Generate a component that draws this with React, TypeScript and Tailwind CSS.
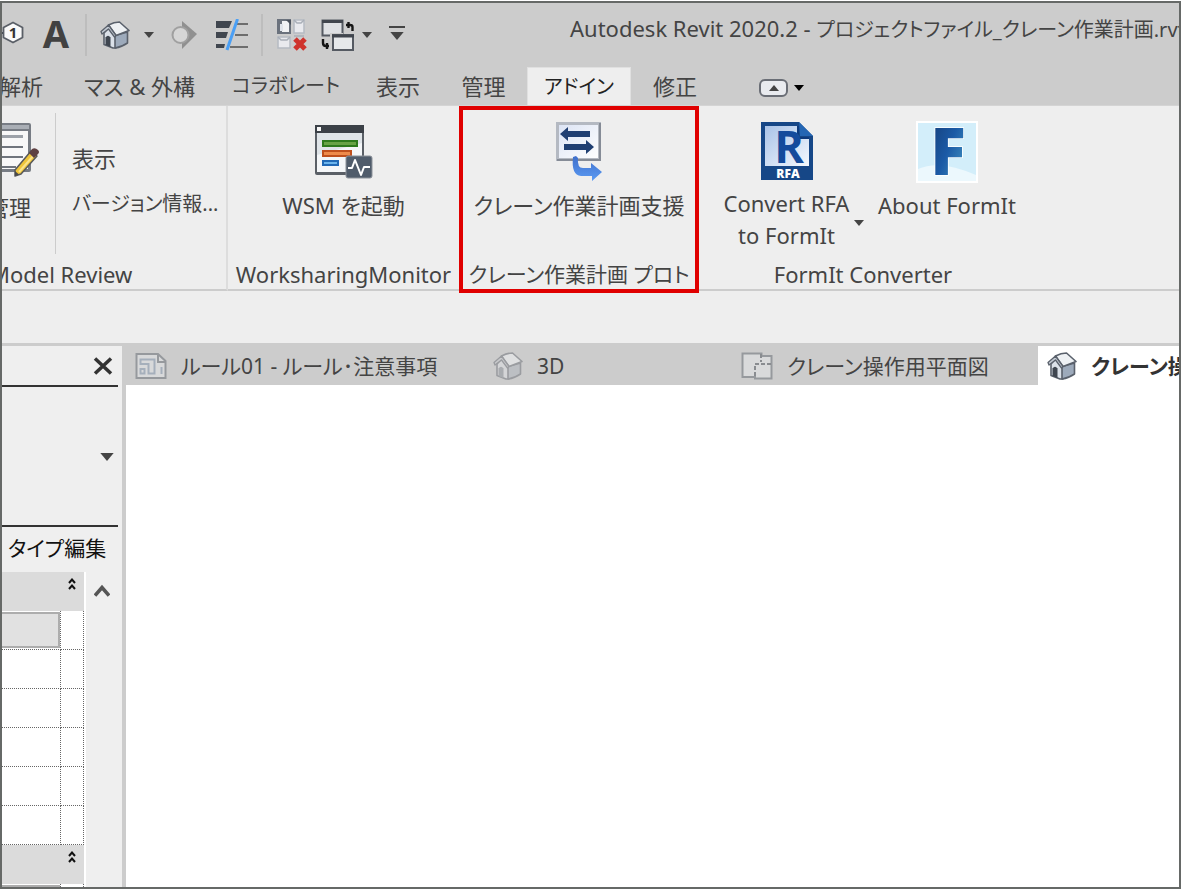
import type { ReactNode } from "react";

const FONT =
  "font-['Noto_Sans','Noto_Sans_CJK_JP',sans-serif] [font-feature-settings:'palt']";

function Caret({ className = "" }: { className?: string }) {
  return (
    <svg viewBox="0 0 10 6" className={className} aria-hidden="true">
      <path d="M0 0H10L5 6Z" fill="currentColor" />
    </svg>
  );
}

function HouseIcon({ faded = false, className = "" }: { faded?: boolean; className?: string }) {
  const line = faded ? "#9a9ca0" : "#5a616c";
  const wall = faded ? "#bcbfc3" : "#9daabb";
  return (
    <svg viewBox="0 0 30 28" className={className} aria-hidden="true">
      <path d="M4 12 9 6.500 16 14V27L13 27 4 23.500Z" fill={faded ? "#d4d5d7" : "#dbe1e9"} stroke={line} strokeWidth="1.600" strokeLinejoin="round" />
      <path d="M15 14.500 27.500 11V22Q22 26 15 27Z" fill={wall} stroke={line} strokeWidth="1.600" strokeLinejoin="round" />
      <path d="M8.500 4Q14 1 19.500 1L29 9.500 16 14.500Z" fill={faded ? "#dfe0e1" : "#eef1f4"} stroke={line} strokeWidth="1.600" strokeLinejoin="round" />
      <path d="M1 10.500 8.500 4 16 14.500 14.500 16 8.500 8 2 13Z" fill={faded ? "#c9cacc" : "#c3cad3"} stroke={line} strokeWidth="1.300" strokeLinejoin="round" />
      <path d="M5.500 24V16.500Q8 13 10.500 16.500V26Z" fill={faded ? "#a9acb0" : "#3f4650"} />
    </svg>
  );
}

function BalloonIcon() {
  return (
    <svg viewBox="0 0 24 24" className="h-6 w-6" aria-hidden="true">
      <path d="M13 1.500 22.500 6.500V16.500L13 21.500 3.500 16.500V6.500Z" fill="#fafafa" stroke="#5a5f67" strokeWidth="1.800" strokeLinejoin="round" />
      <path d="M0 12H3" stroke="#4a4f57" strokeWidth="2" />
      <text x="13" y="17" textAnchor="middle" fontSize="15" fontWeight="700" fill="#333" fontFamily="Open Sans, sans-serif">1</text>
    </svg>
  );
}

function SectionMarkIcon() {
  return (
    <svg viewBox="0 0 26 30" className="h-[30px] w-[26px]" aria-hidden="true">
      <path d="M11 1 26 14 11 29Z" fill="#909090" />
      <circle cx="9.500" cy="15" r="8" fill="#d6d6d6" stroke="#a0a0a0" strokeWidth="2" />
    </svg>
  );
}

function ThinLinesIcon() {
  return (
    <svg viewBox="0 0 32 32" className="h-8 w-8" aria-hidden="true">
      <path d="M0 2H16L13 9H0ZM0 13H12L10 19H0ZM0 25H9L8 29H0Z" fill="#40464f" />
      <path d="M21 5H32M19 16H32M14 28H32" stroke="#6d6d6d" strokeWidth="2" />
      <path d="M21.500 0 11 31" stroke="#4a9ff5" strokeWidth="3" />
    </svg>
  );
}

function CloseHiddenIcon() {
  return (
    <svg viewBox="0 0 30 32" className="h-8 w-[30px]" aria-hidden="true">
      <path d="M1 1H13V14H1Z" fill="#f1f2f4" stroke="#6b727d" strokeWidth="2" />
      <path d="M0 0H5V14H0Z" fill="#6b727d" />
      <path d="M3 5H6V12H3Z" fill="#dfe3ea" />
      <path d="M9 1H14V6Z" fill="#4b525d" />
      <path d="M17 1H27V14H17ZM1 18H13V29H1Z" fill="#e9eaee" stroke="#b5bac2" strokeWidth="1.500" />
      <path d="M17 1 20 4H24L27 1M1 18 4 21H10L13 18M17 17H27" stroke="#a9afb8" strokeWidth="1.500" fill="none" />
      <path d="M18 20 28 30M28 20 18 30" stroke="#cf332c" strokeWidth="5" />
    </svg>
  );
}

function SwitchWindowsIcon() {
  return (
    <svg viewBox="0 0 34 34" className="h-[34px] w-[34px]" aria-hidden="true">
      <path d="M1.500 2.500H21.500V17.500H1.500Z" fill="#dfe1e4" stroke="#555a62" strokeWidth="2" />
      <path d="M1 3.500H22" stroke="#41464e" strokeWidth="3" />
      <path d="M9 15H22V20H9Z" fill="#ccc" />
      <path d="M12 17H32V32H12Z" fill="#e6e8ea" stroke="#555a62" strokeWidth="2" />
      <path d="M11 18H33" stroke="#41464e" strokeWidth="3" />
      <path d="M25 7H29Q31.500 7 31.500 9V13M27.500 4V10M2 21V25Q2 28 5 28H8M6 25V31" fill="none" stroke="#151515" strokeWidth="2.400" />
    </svg>
  );
}

function ManageIcon() {
  return (
    <svg viewBox="0 0 48 56" className="h-14 w-12" aria-hidden="true">
      <rect x="0" y="1" width="40" height="49" rx="2" fill="#777c84" />
      <path d="M0 3H38V7H0Z" fill="#a9aeb5" />
      <path d="M0 9H37V47H0Z" fill="#f8f8f8" />
      <path d="M0 13H32V16H0Z" fill="#9da2a9" />
      <path d="M0 25H32M0 35H32M0 45H25" stroke="#70757d" strokeWidth="2" />
      <path d="M40 29 46 34 30 52 24 54 24 48Z" fill="#efc53a" stroke="#57585a" strokeWidth="1.500" strokeLinejoin="round" />
      <path d="M28 50 43 33" stroke="#fbe38b" strokeWidth="2" />
      <path d="M38 31 41 27Q44 25 47 28 49 30 47 32L43 36Z" fill="#5e4143" />
      <path d="M24 54 24 49 28 52.500Z" fill="#4b4b4b" />
    </svg>
  );
}

function MonitorIcon() {
  return (
    <svg viewBox="0 0 60 58" className="h-[58px] w-[60px]" aria-hidden="true">
      <rect x="1" y="2" width="49" height="50" rx="2" fill="#5a5f66" />
      <path d="M3 10H48V49H3Z" fill="#f4f6f8" />
      <path d="M3 10H48V20L3 32Z" fill="#dfe4e8" />
      <path d="M1 2H50V10H1Z" fill="#3b4047" />
      <rect x="3" y="4" width="4" height="4" fill="#f5f5f5" />
      <rect x="9" y="18" width="34" height="5" fill="#68a345" stroke="#2e7a1c" strokeWidth="2" />
      <rect x="9" y="28" width="28" height="5" fill="#ee8a4a" stroke="#bf4f1c" strokeWidth="2" />
      <rect x="9" y="38" width="15" height="4" fill="#6bb4ec" stroke="#2068b5" strokeWidth="2" />
      <rect x="32" y="33" width="26" height="22" rx="2" fill="#505c6b" stroke="#8c929a" />
      <path d="M34 45H38L41 37 47 52 50 44H56" fill="none" stroke="#fff" strokeWidth="2" strokeLinejoin="round" />
    </svg>
  );
}

function CraneIcon() {
  return (
    <svg viewBox="0 0 48 60" className="h-[60px] w-12" aria-hidden="true">
      <defs>
        <linearGradient id="crane-board" x1="0" y1="0" x2="1" y2="1">
          <stop offset="0" stopColor="#dbe3f4" />
          <stop offset="1" stopColor="#fff" />
        </linearGradient>
        <linearGradient id="crane-arrow" x1="0" y1="0" x2="0" y2="1">
          <stop offset="0" stopColor="#3f6fcb" />
          <stop offset="1" stopColor="#5b9bf3" />
        </linearGradient>
      </defs>
      <rect x="2.500" y="1.500" width="42" height="36" fill="url(#crane-board)" stroke="#b4b9c2" strokeWidth="3" />
      <path d="M45 1V38H2" fill="none" stroke="#858b96" strokeWidth="2" />
      <path d="M5 12 13 5V9H35V15H13V19Z" fill="#203f72" />
      <path d="M39 25 31 18V22H9V28H31V32Z" fill="#203f72" />
      <path d="M18 35 21 34 23 36Q22 46 28 46H36V41L47 50 37 59V54H26Q16 53 18 35Z" fill="url(#crane-arrow)" />
    </svg>
  );
}

function RfaIcon() {
  return (
    <svg viewBox="0 0 52 60" className="h-[60px] w-[52px]" aria-hidden="true">
      <defs>
        <linearGradient id="rfa-page" x1="0" y1="0" x2="1" y2="1">
          <stop offset="0" stopColor="#a9c3e8" />
          <stop offset="1" stopColor="#f4f8fd" />
        </linearGradient>
      </defs>
      <path d="M0 1H38L52 15V59H0Z" fill="#164787" />
      <path d="M4 5H37V17H48V45H4Z" fill="url(#rfa-page)" />
      <path d="M38 1 52 15H39Z" fill="#2466b3" />
      <path d="M37 5V17H48" fill="none" stroke="#0d3a7d" strokeWidth="2" />
      <text x="28" y="42" textAnchor="middle" fontSize="45" fontWeight="700" fill="#144b9c" fontFamily="Open Sans, sans-serif">R</text>
      <text x="27" y="57" textAnchor="middle" fontSize="12" fontWeight="800" fill="#fff" fontFamily="Open Sans, sans-serif">RFA</text>
    </svg>
  );
}

function FormItIcon() {
  return (
    <svg viewBox="0 0 62 62" className="h-[62px] w-[62px]" aria-hidden="true">
      <defs>
        <linearGradient id="formit-letter" x1="0" y1="0" x2="1" y2="1">
          <stop offset="0" stopColor="#14386f" />
          <stop offset="0.500" stopColor="#1b5aa6" />
          <stop offset="1" stopColor="#4fa5c9" />
        </linearGradient>
      </defs>
      <rect width="62" height="62" fill="#fff" />
      <rect x="2" y="2" width="58" height="58" fill="#d3eefa" />
      <path d="M2 48Q24 38 60 54V60H2Z" fill="#ecf8fd" />
      <text x="32" y="54" textAnchor="middle" fontSize="66" fontWeight="800" fill="url(#formit-letter)" stroke="#fff" strokeWidth="1.500" paintOrder="stroke" fontFamily="Open Sans, sans-serif">F</text>
    </svg>
  );
}

function SheetIcon() {
  return (
    <svg viewBox="0 0 32 26" className="h-[26px] w-8" aria-hidden="true">
      <path d="M1.500 1H23L30.500 8V25H1.500Z" fill="#d8d9da" stroke="#96999d" strokeWidth="2" />
      <path d="M23 1V9H30" fill="none" stroke="#96999d" strokeWidth="2" />
      <path d="M5.500 11V6.500H19.500V20.500H13.500V11ZM5.500 16H9.500V20.500H5.500ZM26.500 14V21" fill="none" stroke="#a5afbb" strokeWidth="2" />
    </svg>
  );
}

function PlanIcon() {
  return (
    <svg viewBox="0 0 32 28" className="h-7 w-8" aria-hidden="true">
      <path d="M1.500 1.500H20.500V4H30.500V26.500H14V25H1.500Z" fill="#d9dadb" stroke="#96999d" strokeWidth="2" />
      <path d="M20 2V10M30 12H14V26" fill="none" stroke="#898c90" strokeWidth="2" strokeDasharray="4 2" />
    </svg>
  );
}

function DoubleChevron() {
  return (
    <svg viewBox="0 0 8 12" className="h-3 w-2" aria-hidden="true">
      <path d="M1 5 4 1.500 7 5M1 11 4 7.500 7 11" fill="none" stroke="#111" strokeWidth="2" />
    </svg>
  );
}

function RibbonTab({ width, children, active = false }: { width: string; children: ReactNode; active?: boolean }) {
  return (
    <button
      type="button"
      role="tab"
      aria-selected={active}
      className={`flex shrink-0 items-center justify-center whitespace-nowrap ${width} ${active ? "border border-b-0 border-[#e0e0e0] bg-[#eee] text-[#222]" : ""}`}
    >
      {children}
    </button>
  );
}

function LargeButton({ icon, children }: { icon: ReactNode; children: ReactNode }) {
  return (
    <button type="button" className="flex flex-col items-center gap-1.5 whitespace-nowrap">
      <span className="flex h-[62px] items-center">{icon}</span>
      <span className="flex h-8 items-center">{children}</span>
    </button>
  );
}

function ViewTab({ icon, width, children, active = false }: { icon: ReactNode; width: string; children: ReactNode; active?: boolean }) {
  return (
    <button
      type="button"
      role="tab"
      aria-selected={active}
      className={`flex shrink-0 items-center gap-[14px] whitespace-nowrap pl-[9px] ${width} ${active ? "bg-white font-semibold text-[#333]" : ""}`}
    >
      {icon}
      <span>{children}</span>
    </button>
  );
}

function GroupHeader() {
  return (
    <tr className="h-[39px] bg-[#dbdbdb]">
      <th colSpan={2} className="p-0 align-top">
        <button type="button" aria-label="グループを折りたたむ" className="flex w-full justify-end pt-1.5 pr-2">
          <DoubleChevron />
        </button>
      </th>
    </tr>
  );
}

function PropertyRow({ button = false }: { button?: boolean }) {
  return (
    <tr className="h-[39px]">
      <td className="border-r border-b border-dotted border-[#666] p-0">
        {button && (
          <button type="button" aria-label="編集" className="block h-9 w-full border-2 border-l-0 border-[#adadad] bg-[#e1e1e1]" />
        )}
      </td>
      <td className="border-r border-b border-dotted border-[#666] p-0" />
    </tr>
  );
}

const Separator = () => <span className="h-[42px] w-0.5 bg-[#bdbdbd]" />;

export default function App() {
  return (
    <div className={`h-screen w-full bg-white py-px pr-px text-[22px] leading-8 text-[#444] ${FONT}`}>
      <div className="flex h-full flex-col overflow-hidden border-2 border-[#666967] bg-[#ccc]">
        <header className="flex h-16 shrink-0 items-center overflow-hidden">
          <div className="flex shrink-0 items-center">
            <button type="button" aria-label="タグ" className="-ml-0.5 w-6 pb-1"><BalloonIcon /></button>
            <button type="button" aria-label="文字" className="ml-[18px] w-7 pb-1 text-[38px] leading-none font-bold text-[#414141]">A</button>
            <span className="ml-[15px] flex"><Separator /></span>
            <button type="button" aria-label="3D ビュー" className="ml-[13px]"><HouseIcon className="h-7 w-[30px]" /></button>
            <button type="button" aria-label="3D ビューの選択" className="ml-[14px]"><Caret className="h-1.5 w-[10px]" /></button>
            <button type="button" aria-label="断面" className="ml-[17px]"><SectionMarkIcon /></button>
            <button type="button" aria-label="細線" className="ml-[19px]"><ThinLinesIcon /></button>
            <span className="ml-[13px] flex"><Separator /></span>
            <button type="button" aria-label="非表示ウィンドウを閉じる" className="ml-[14px]"><CloseHiddenIcon /></button>
            <button type="button" aria-label="ウィンドウ切り替え" className="ml-[14px]"><SwitchWindowsIcon /></button>
            <button type="button" aria-label="ウィンドウの選択" className="ml-[7px]"><Caret className="h-1.5 w-[10px]" /></button>
            <button type="button" aria-label="カスタマイズ" className="ml-[17px] flex flex-col gap-1 pb-1">
              <span className="h-0.5 w-4 bg-[#444]" />
              <Caret className="h-2 w-4" />
            </button>
          </div>
          <h1 className="ml-[165px] pb-3 whitespace-nowrap">
            Autodesk Revit 2020.2 - <span className="text-[20px]">プロジェクトファイル_クレーン作業計画.rvt</span>
          </h1>
        </header>

        <div className="flex h-[38px] shrink-0" role="tablist" aria-label="リボン">
          <RibbonTab width="w-[61px] pr-5 !justify-end">解析</RibbonTab>
          <RibbonTab width="w-[153px]">マス &amp; 外構</RibbonTab>
          <RibbonTab width="w-[140px] text-[20px]">コラボレート</RibbonTab>
          <RibbonTab width="w-[84px]">表示</RibbonTab>
          <RibbonTab width="w-[87px]">管理</RibbonTab>
          <RibbonTab width="w-[104px] text-[20px]" active>アドイン</RibbonTab>
          <RibbonTab width="w-[88px]">修正</RibbonTab>
          <button type="button" aria-label="リボンを最小化" className="mt-3 ml-10 flex h-[18px] w-[29px] items-center justify-center rounded-md border-2 border-[#6a6e76] bg-[#e9ebef]">
            <svg viewBox="0 0 10 6" className="h-1.5 w-[10px]" aria-hidden="true"><path d="M0 6H10L5 0Z" fill="#444" /></svg>
          </button>
          <button type="button" aria-label="表示モード" className="mt-1 ml-1.5 text-black"><Caret className="h-1.5 w-[10px]" /></button>
        </div>

        <div className="flex h-[188px] shrink-0 border-t border-[#d4d4d4] bg-[#eee]">
          <section className="mb-0.5 flex w-[226px] shrink-0 flex-col border-r-2 border-b-2 border-r-[#ddd] border-b-[#ccc]">
            <div className="flex flex-1">
              <div className="mt-[7px] mb-1 flex w-[54px] shrink-0 justify-end overflow-hidden border-r border-[#ccc] pr-4">
                <button type="button" className="flex shrink-0 flex-col items-end gap-[13px] whitespace-nowrap">
                  <span className="mt-[9px]"><ManageIcon /></span>
                  <span className="mr-2">管理</span>
                </button>
              </div>
              <div className="flex flex-col items-start gap-[14px] pt-9 pl-4 whitespace-nowrap">
                <button type="button">表示</button>
                <button type="button" className="text-[20px]">バージョン情報...</button>
              </div>
            </div>
            <h2 className="-ml-3 h-[31px]">Model Review</h2>
          </section>

          <section className="mb-0.5 flex w-[231px] shrink-0 flex-col items-center border-b-2 border-[#ccc] whitespace-nowrap">
            <div className="flex flex-1 pt-[15px]">
              <LargeButton icon={<MonitorIcon />}>WSM を起動</LargeButton>
            </div>
            <h2 className="h-[31px]">WorksharingMonitor</h2>
          </section>

          <section className="flex w-60 shrink-0 flex-col items-center border-4 border-[#e00000] whitespace-nowrap">
            <div className="flex flex-1 pt-[11px]">
              <LargeButton icon={<CraneIcon />}>クレーン作業計画支援</LargeButton>
            </div>
            <h2 className="h-[31px] text-[21px]">クレーン作業計画 プロト</h2>
          </section>

          <section className="mb-0.5 flex min-w-0 flex-1 flex-col items-start border-b-2 border-[#ccc] whitespace-nowrap">
            <div className="flex flex-1 pt-[9px]">
              <button type="button" className="flex w-[175px] flex-col items-center">
                <span className="flex h-[72px] items-center"><RfaIcon /></span>
                <span>Convert RFA</span>
                <span>to FormIt</span>
              </button>
              <button type="button" aria-label="変換オプション" className="-ml-5 mt-[105px] h-1.5 w-[10px]"><Caret className="h-1.5 w-[10px]" /></button>
              <div className="ml-[14px] mt-1.5"><LargeButton icon={<FormItIcon />}>About FormIt</LargeButton></div>
            </div>
            <h2 className="h-[31px] w-[328px] text-center">FormIt Converter</h2>
          </section>
        </div>

        <div className="h-[50px] shrink-0 bg-[#eee]" />

        <div className="flex min-h-0 flex-1">
          <aside className="mt-[3px] flex w-[120px] shrink-0 flex-col bg-[#efefef] pr-1">
            <div className="flex h-[41px] shrink-0 items-center justify-end border-b-2 border-[#333] pr-[5px]">
              <button type="button" aria-label="閉じる">
                <svg viewBox="0 0 20 18" className="h-[18px] w-5" aria-hidden="true">
                  <path d="M2 1.500 18 16.500M18 1.500 2 16.500" stroke="#333" strokeWidth="3.500" />
                </svg>
              </button>
            </div>
            <button type="button" aria-label="タイプの選択" className="flex h-[140px] shrink-0 items-center justify-end border-b-2 border-[#333] pt-0.5 pr-[3px]">
              <Caret className="h-2 w-4" />
            </button>
            <button type="button" className="h-[45px] shrink-0 pb-1 pl-1.5 text-left text-[21px] whitespace-nowrap text-[#111]">タイプ編集</button>
            <div className="flex min-h-0 flex-1 overflow-hidden">
              <div className="w-[84px] shrink-0 bg-white pr-0.5">
                <table className="w-full table-fixed border-separate border-spacing-0" aria-label="プロパティ">
                  <colgroup><col className="w-[59px]" /><col /></colgroup>
                  <tbody>
                    <GroupHeader />
                    <PropertyRow button />
                    <PropertyRow />
                    <PropertyRow />
                    <PropertyRow />
                    <PropertyRow />
                    <PropertyRow />
                    <GroupHeader />
                    <PropertyRow button />
                  </tbody>
                </table>
              </div>
              <div className="flex flex-1 items-start justify-center pt-3">
                <button type="button" aria-label="上へスクロール">
                  <svg viewBox="0 0 16 14" className="h-[14px] w-4" aria-hidden="true">
                    <path d="M1 11.500 8 3.500 15 11.500" fill="none" stroke="#555" strokeWidth="3.500" />
                  </svg>
                </button>
              </div>
            </div>
          </aside>

          <main className="ml-1 flex min-w-0 flex-1 flex-col overflow-hidden">
            <div className="flex h-[42px] shrink-0 overflow-hidden pt-[3px] text-[21px]" role="tablist" aria-label="ビュー">
              <ViewTab width="w-[358px]" icon={<SheetIcon />}>ルール01 - ルール･注意事項</ViewTab>
              <ViewTab width="w-[248px]" icon={<HouseIcon faded className="h-7 w-[30px]" />}>3D</ViewTab>
              <ViewTab width="w-[306px]" icon={<PlanIcon />}>クレーン操作用平面図</ViewTab>
              <ViewTab width="w-[200px]" active icon={<HouseIcon className="h-7 w-[30px]" />}>クレーン操作</ViewTab>
            </div>
            <div className="flex-1 bg-white" />
          </main>
        </div>
      </div>
    </div>
  );
}
